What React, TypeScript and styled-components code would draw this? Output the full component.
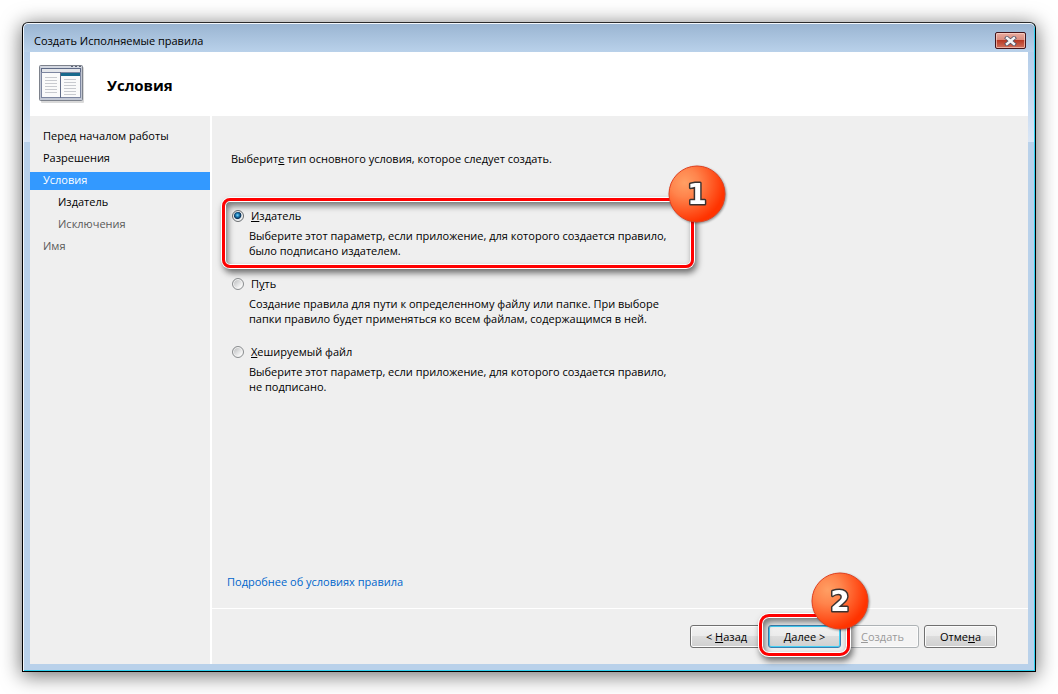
import React from "react";
import styled, { createGlobalStyle, css } from "styled-components";

const GlobalStyle = createGlobalStyle`
  *, *::before, *::after { box-sizing: border-box; }
  body {
    margin: 0;
    background: #fff;
    color: #000;
    font: 11px/16px "Open Sans", "Noto Sans", sans-serif;
  }
`;

const Desktop = styled.div`
  min-height: 100vh;
  padding: 22px;
  display: flex;
`;

const Dialog = styled.section`
  flex: 1;
  display: flex;
  flex-direction: column;
  border: 1px solid #000;
  border-top-color: #2b2b2b;
  border-radius: 6px 6px 0 0;
  padding: 0 7px 7px;
  background:
    linear-gradient(#b4cde9, #d9e6f6) 0 29px / 100% 90px no-repeat,
    linear-gradient(#99b4d1, #b9d1ea) 0 0 / 100% 29px no-repeat,
    #b9d1ea;
  box-shadow:
    inset 0 1px 0 #f4f8fc,
    inset 1px 0 0 #f4f8fc,
    inset -1px -1px 0 #2fd0f0,
    0 3px 20px 1px rgba(0, 0, 0, 0.55);
`;

const TitleBar = styled.header`
  height: 29px;
  display: flex;
  align-items: center;
  justify-content: space-between;
  padding: 6px 2px 0 4px;
`;

const Title = styled.h1`
  margin: 0;
  font: inherit;
`;

const CloseButton = styled.button`
  width: 31px;
  height: 17px;
  padding: 0;
  display: grid;
  place-items: center;
  border: 1px solid #43141a;
  border-radius: 2px;
  background: linear-gradient(#e9aca0, #d98a7c 48%, #b83a25 50%, #d0705c);
  box-shadow: inset 0 0 0 1px rgba(255, 220, 210, 0.6);
`;

const Client = styled.div`
  flex: 1;
  display: flex;
  flex-direction: column;
  background: #efefef;
`;

const Banner = styled.div`
  height: 64px;
  display: flex;
  align-items: center;
  gap: 21px;
  padding-left: 8px;
  background: #fff;
`;

const StepTitle = styled.h2`
  margin: 2px 0 0;
  font-size: 15px;
  line-height: 20px;
  font-weight: 700;
`;

const Columns = styled.div`
  flex: 1;
  display: flex;
`;

const Steps = styled.ul`
  width: 182px;
  margin: 0;
  padding: 12px 0;
  display: flex;
  flex-direction: column;
  gap: 4px;
  list-style: none;
  border-right: 2px solid #fff;
`;

const Step = styled.li<{ $state?: "current" | "pending"; $nested?: boolean }>`
  padding-bottom: 2px;
  padding-left: ${(p) => (p.$nested ? 28 : 13)}px;
  ${(p) => p.$state === "current" && css`background: #3399ff; color: #fff;`}
  ${(p) => p.$state === "pending" && css`color: #5a5a5a;`}
`;

const Main = styled.main`
  flex: 1;
  display: flex;
  flex-direction: column;
`;

const Content = styled.div`
  flex: 1;
  display: flex;
  flex-direction: column;
  align-items: flex-start;
  padding: 35px 15px 18px;
`;

const Options = styled.fieldset`
  margin: 0;
  padding: 0 4px;
  border: 0;
  display: flex;
  flex-direction: column;
  gap: 18px;
`;

const Prompt = styled.legend`
  padding: 0;
  margin-bottom: 41px;
`;

const Option = styled.div`
  position: relative;
  max-width: 453px;
`;

const OptionLabel = styled.label`
  display: flex;
  align-items: center;
  gap: 7px;
`;

const Radio = styled.input`
  appearance: none;
  width: 12px;
  height: 12px;
  margin: 0 0 0 1px;
  border: 1px solid #8a8d8f;
  border-radius: 50%;
  background: linear-gradient(135deg, #b4b6b8, #f6f6f6 75%);
  box-shadow: inset 0 0 0 1px #f4f4f4;
  &:checked {
    background: radial-gradient(circle at 45% 42%, #7fd4f7 0, #1c7fb8 22%, #0b2f55 42%, #dfe6ea 54%);
    border-color: #6a6d70;
  }
`;

const OptionText = styled.p`
  margin: 4px 0 0;
  padding: 0 12px 0 18px;
  line-height: 15px;
`;

const HelpLink = styled.a`
  margin-top: auto;
  color: #0066cc;
  text-decoration: none;
`;

const Footer = styled.footer`
  display: flex;
  justify-content: flex-end;
  gap: 5px;
  padding: 16px 31px 16px 16px;
  border-top: 1px solid #fff;
`;

const ButtonSlot = styled.div`
  position: relative;
  z-index: 1;
`;

const Button = styled.button<{ $primary?: boolean }>`
  display: block;
  width: 73px;
  height: 23px;
  padding: 0;
  border: 1px solid #707070;
  border-radius: 3px;
  font: inherit;
  color: #000;
  background: linear-gradient(#f2f2f2, #ebebeb 48%, #dddddd 50%, #cfcfcf);
  box-shadow: inset 0 0 0 1px #fcfcfc;
  ${(p) => p.$primary && css`
    border-color: #3c7fb1;
    box-shadow: inset 0 0 0 1px #46d0f4;
  `}
  &:disabled {
    border-color: #adb2b5;
    background: #f4f4f4;
    color: #9a9a9a;
  }
`;

const Highlight = styled.span<{ $tight?: boolean }>`
  position: absolute;
  inset: ${(p) => (p.$tight ? "-11px -9px -8px" : "-10px -10px -10px -9px")};
  border: 3px solid #f00;
  border-radius: ${(p) => (p.$tight ? 10 : 8)}px;
  box-shadow:
    0 0 0 1px #fff,
    inset 0 0 0 1px #fff,
    2px 4px 6px 1px rgba(0, 0, 0, 0.55),
    inset 2px 4px 6px 1px rgba(0, 0, 0, 0.5);
  pointer-events: none;
`;

const Marker = styled.svg<{ $tight?: boolean }>`
  position: absolute;
  top: ${(p) => (p.$tight ? -54 : -44)}px;
  right: ${(p) => (p.$tight ? -29 : -43)}px;
  width: 60px;
  height: 60px;
  pointer-events: none;
  filter: drop-shadow(1px 1px 1px rgba(0, 0, 0, 0.4));
  text {
    font: bold 28px "DejaVu Sans", sans-serif;
    text-anchor: middle;
    fill: #fff;
    stroke: #3a3230;
    stroke-width: 3px;
    stroke-linejoin: round;
    paint-order: stroke;
  }
`;

function Callout({ number, tight }: { number: number; tight?: boolean }) {
  const id = `ball-${number}`;
  return (
    <>
      <Highlight $tight={tight} />
      <Marker $tight={tight} viewBox="0 0 60 60">
        <defs>
          <radialGradient id={id} cx="0.28" cy="0.3" r="0.72">
            <stop offset="0" stopColor="#ff9f64" />
            <stop offset="0.35" stopColor="#ff844c" />
            <stop offset="1" stopColor="#ff3300" />
          </radialGradient>
        </defs>
        <circle cx="30" cy="30" r="28" fill={`url(#${id})`} stroke="#e0401f" />
        <text x="30" y="40">{number}</text>
      </Marker>
    </>
  );
}

function WizardIcon() {
  return (
    <svg width="48" height="42" viewBox="0 0 48 42" aria-hidden="true">
      <rect x="3" y="4" width="43" height="36" rx="1" fill="#000" opacity="0.15" />
      <rect x="1.5" y="2.5" width="43" height="35" rx="1" fill="#c3c8d4" stroke="#7d828c" />
      <path d="M2.500 4h41" stroke="#e4e7ee" />
      <path d="M33 3.500h2M37 3.500h2M41 3.500h2" stroke="#5d6474" />
      <rect x="3.500" y="5.500" width="39" height="4" fill="#e4e6ea" stroke="#5f6a86" />
      <rect x="3.500" y="9.500" width="39" height="25" fill="#fafafa" stroke="#7d86a0" />
      <path d="M22.500 9v26" stroke="#5f6a86" />
      <rect x="23" y="10" width="19" height="3" fill="#17698c" />
      <path d="M7 14.500h12M7 17.500h12M7 20.500h12M7 23.500h12M7 26.500h12M7 29.500h12M26 16.500h12M26 19.500h12M26 22.500h12M26 25.500h12M26 28.500h12M26 31.500h12" stroke="#c8cacf" />
    </svg>
  );
}

interface OptionRowProps {
  value: string;
  label: React.ReactNode;
  text: string;
  checked?: boolean;
  children?: React.ReactNode;
}

function OptionRow({ value, label, text, checked, children }: OptionRowProps) {
  return (
    <Option>
      <OptionLabel>
        <Radio type="radio" name="condition" value={value} defaultChecked={checked} aria-describedby={`${value}-text`} />
        <span>{label}</span>
      </OptionLabel>
      <OptionText id={`${value}-text`}>{text}</OptionText>
      {children}
    </Option>
  );
}

export default function App() {
  return (
    <>
      <GlobalStyle />
      <Desktop>
        <Dialog role="dialog" aria-labelledby="dialog-title">
          <TitleBar>
            <Title id="dialog-title">Создать Исполняемые правила</Title>
            <CloseButton type="button" aria-label="Закрыть">
              <svg width="13" height="10" viewBox="0 0 13 10">
                <path d="M3 2l7 6M10 2l-7 6" stroke="#4a4f63" strokeWidth="4" strokeLinecap="square" />
                <path d="M3 2l7 6M10 2l-7 6" stroke="#f4f4f6" strokeWidth="2.500" strokeLinecap="square" />
              </svg>
            </CloseButton>
          </TitleBar>
          <Client>
            <Banner>
              <WizardIcon />
              <StepTitle>Условия</StepTitle>
            </Banner>
            <Columns>
              <Steps>
                <Step>Перед началом работы</Step>
                <Step>Разрешения</Step>
                <Step $state="current" aria-current="step">Условия</Step>
                <Step $nested>Издатель</Step>
                <Step $nested $state="pending">Исключения</Step>
                <Step $state="pending">Имя</Step>
              </Steps>
              <Main>
                <Content>
                  <Options>
                    <Prompt>Выберит<u>е</u> тип основного условия, которое следует создать.</Prompt>
                    <OptionRow
                      value="publisher"
                      checked
                      label={<><u>И</u>здатель</>}
                      text="Выберите этот параметр, если приложение, для которого создается правило, было подписано издателем."
                    >
                      <Callout number={1} />
                    </OptionRow>
                    <OptionRow
                      value="path"
                      label={<>П<u>у</u>ть</>}
                      text="Создание правила для пути к определенному файлу или папке. При выборе папки правило будет применяться ко всем файлам, содержащимся в ней."
                    />
                    <OptionRow
                      value="hash"
                      label={<><u>Х</u>ешируемый файл</>}
                      text="Выберите этот параметр, если приложение, для которого создается правило, не подписано."
                    />
                  </Options>
                  <HelpLink href="#help">Подробнее об условиях правила</HelpLink>
                </Content>
                <Footer>
                  <Button type="button">&lt; <u>Н</u>азад</Button>
                  <ButtonSlot>
                    <Button type="button" $primary><u>Д</u>алее &gt;</Button>
                    <Callout number={2} tight />
                  </ButtonSlot>
                  <Button type="button" disabled><u>С</u>оздать</Button>
                  <Button type="button">Отме<u>н</u>а</Button>
                </Footer>
              </Main>
            </Columns>
          </Client>
        </Dialog>
      </Desktop>
    </>
  );
}
